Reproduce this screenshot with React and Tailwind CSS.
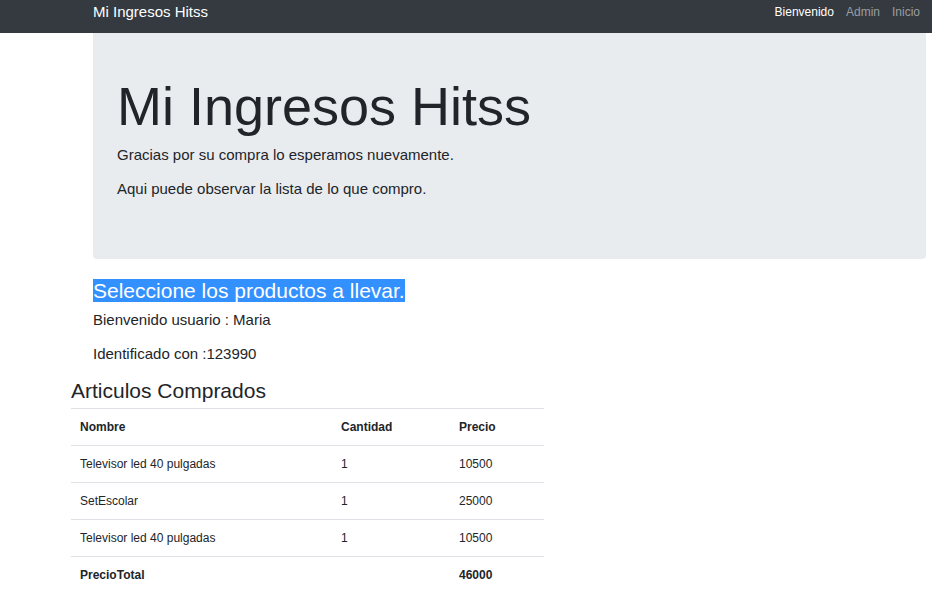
import React from 'react';

// Pantalla de resumen de compra: barra superior, jumbotron y tabla de artículos.

const articulos = [
  { nombre: 'Televisor led 40 pulgadas', cantidad: 1, precio: 10500 },
  { nombre: 'SetEscolar', cantidad: 1, precio: 25000 },
  { nombre: 'Televisor led 40 pulgadas', cantidad: 1, precio: 10500 },
];

export default function App() {
  const total = articulos.reduce((acc, a) => acc + a.precio, 0);

  return (
    <div className="min-h-screen bg-white text-[#212529]" style={{ fontFamily: '"Liberation Sans", Arial, sans-serif' }}>
      {/* Barra de navegación */}
      <nav className="h-[33px] bg-[#343a40] flex items-start justify-between pl-[93px] pr-[6px]">
        <span className="pt-[1px] text-[15px] leading-[22.5px] text-white">Mi Ingresos Hitss</span>
        <div className="flex pt-[3px] text-[12px] leading-[18px]">
          <span className="px-[6px] text-white">Bienvenido</span>
          <span className="px-[6px] text-[#9a9da0]">Admin</span>
          <span className="px-[6px] text-[#9a9da0]">Inicio</span>
        </div>
      </nav>

      {/* Jumbotron */}
      <div className="ml-[93px] mr-[6px] bg-[#e9ecef] rounded-b-[4px] pt-[41px] pb-[46px] px-[24px]">
        <h1 className="text-[54px] leading-[1.2] font-normal mb-[5px]">Mi Ingresos Hitss</h1>
        <p className="text-[15px] leading-[1.5] mb-[12px]">Gracias por su compra lo esperamos nuevamente.</p>
        <p className="text-[15px] leading-[1.5] mb-[12px]">Aqui puede observar la lista de lo que compro.</p>
      </div>

      <div className="pl-[93px] mt-[19px]">
        <h3 className="text-[21px] leading-[1.2] mb-[6px]">
          <span className="bg-[#3390ff] text-white">Seleccione los productos a llevar.</span>
        </h3>
        <p className="text-[15px] leading-[1.5] mb-[12px]">Bienvenido usuario : Maria</p>
        <p className="text-[15px] leading-[1.5] mb-[12px]">Identificado con :123990</p>
      </div>

      <div className="pl-[71px]">
        <h3 className="text-[21px] leading-[1.2] mb-[5px]">Articulos Comprados</h3>
        <table className="w-[473px] text-[12px] leading-[18px] border-collapse">
          <thead>
            <tr className="border-t border-[#dee2e6]">
              <th className="w-[261px] text-left font-bold p-[9px]">Nombre</th>
              <th className="w-[118px] text-left font-bold p-[9px]">Cantidad</th>
              <th className="text-left font-bold p-[9px]">Precio</th>
            </tr>
          </thead>
          <tbody>
            {articulos.map((a, i) => (
              <tr key={i} className="border-t border-[#dee2e6]">
                <td className="p-[9px]">{a.nombre}</td>
                <td className="p-[9px]">{a.cantidad}</td>
                <td className="p-[9px]">{a.precio}</td>
              </tr>
            ))}
            <tr className="border-t border-[#dee2e6]">
              <td className="p-[9px] font-bold">PrecioTotal</td>
              <td className="p-[9px]"></td>
              <td className="p-[9px] font-bold">{total}</td>
            </tr>
          </tbody>
        </table>
      </div>
    </div>
  );
}
